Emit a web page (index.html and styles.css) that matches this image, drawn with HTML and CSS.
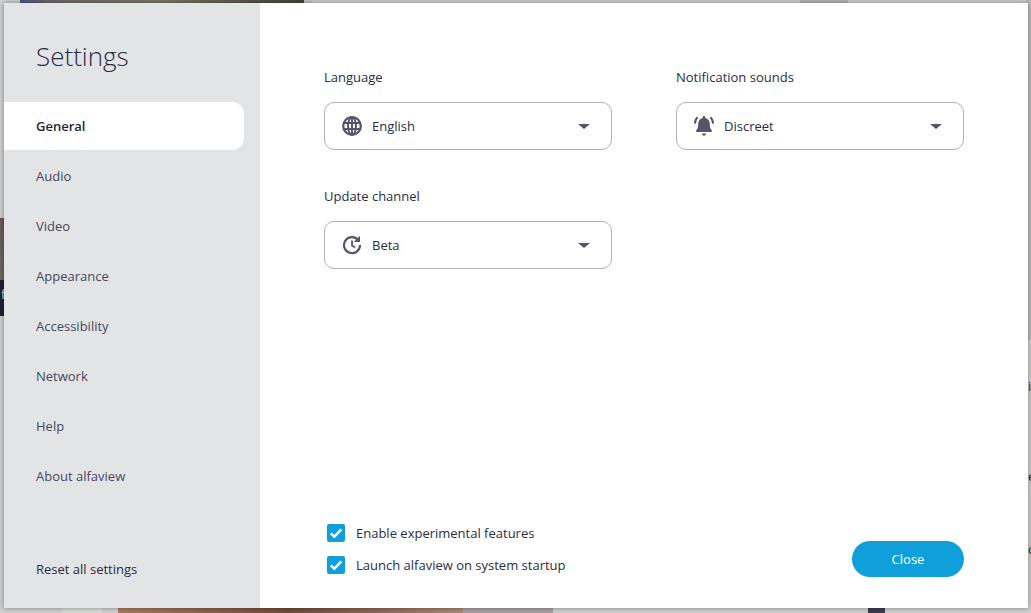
FILE: index.html
```html
<!DOCTYPE html>
<html lang="en">
<head>
<meta charset="utf-8">
<title>Settings</title>
<link rel="stylesheet" href="styles.css">
</head>
<body>
<div class="desktop">
  <div class="tile tile-top-photo"></div>
  <div class="tile tile-top-light"></div>
  <div class="tile tile-top-grey"></div>
  <div class="tile tile-left-photo"></div>
  <div class="tile tile-left-dark"><span class="peek peek-f">f</span></div>
  <div class="tile tile-bottom-pale"></div>
  <div class="tile tile-bottom-photo"></div>
  <div class="tile tile-bottom-mauve"></div>
  <div class="tile tile-bottom-navy"></div>
  <div class="tile tile-right-band"></div>
  <span class="peek peek-i">i</span>
  <span class="peek peek-e">e</span>
  <span class="peek peek-c">c</span>

  <div class="dialog">
    <aside class="sidebar">
      <h1 class="title">Settings</h1>
      <nav class="nav">
        <a class="nav-item active">General</a>
        <a class="nav-item">Audio</a>
        <a class="nav-item">Video</a>
        <a class="nav-item">Appearance</a>
        <a class="nav-item">Accessibility</a>
        <a class="nav-item">Network</a>
        <a class="nav-item">Help</a>
        <a class="nav-item">About alfaview</a>
      </nav>
      <a class="reset">Reset all settings</a>
    </aside>
    <main class="content">
      <div class="fields">
        <div class="field">
          <label class="field-label">Language</label>
          <div class="select">
            <svg class="select-icon" viewBox="0 0 20 20" fill="none" stroke="#55556b" stroke-width="1.9">
              <circle cx="10" cy="10" r="8.800" stroke-width="2.300"/>
              <ellipse cx="10" cy="10" rx="4" ry="8.700"/>
              <path d="M1.600 7h16.800M1.600 13h16.800M10 1.300v17.400"/>
            </svg>
            <span class="select-value">English</span>
            <span class="caret"></span>
          </div>
        </div>
        <div class="field">
          <label class="field-label">Notification sounds</label>
          <div class="select">
            <svg class="select-icon" viewBox="0 0 20 20" fill="#55556b">
              <path d="M10 0c.8 0 1.300.5 1.300 1.200v.9c2.700.6 4.500 3 4.500 5.800 0 3.700 1 5.300 2 6.700.4.600.1 1.400-.6 1.400H2.800c-.7 0-1-.8-.6-1.400 1-1.400 2-3 2-6.700 0-2.800 1.800-5.200 4.500-5.800v-.9C8.700.5 9.200 0 10 0z"/>
              <path d="M8 17.400h4c0 1.300-.9 2.300-2 2.300s-2-1-2-2.300z"/>
              <path d="M3.600 1.300C1.900 2.800 1 4.800.9 7.600M16.400 1.300c1.700 1.500 2.600 3.500 2.700 6.300" fill="none" stroke="#55556b" stroke-width="2"/>
            </svg>
            <span class="select-value">Discreet</span>
            <span class="caret"></span>
          </div>
        </div>
        <div class="field">
          <label class="field-label">Update channel</label>
          <div class="select">
            <svg class="select-icon" viewBox="0 0 20 20" fill="none" stroke="#55556b" stroke-width="2.200">
              <path d="M16.300 5.200A8 8 0 1 0 18 10"/>
              <path d="M18 .8v6.200h-6.200z" fill="#55556b" stroke="none"/>
              <path d="M10 5.500v5l3 2" stroke-width="1.800"/>
            </svg>
            <span class="select-value">Beta</span>
            <span class="caret"></span>
          </div>
        </div>
      </div>
      <div class="footer">
        <div class="checks">
          <label class="check">
            <span class="box"><svg viewBox="0 0 18 18" fill="none" stroke="#fff" stroke-width="2.400"><path d="M3.800 9.300l3.500 3.400 7-7.300"/></svg></span>
            Enable experimental features
          </label>
          <label class="check">
            <span class="box"><svg viewBox="0 0 18 18" fill="none" stroke="#fff" stroke-width="2.400"><path d="M3.800 9.300l3.500 3.400 7-7.300"/></svg></span>
            Launch alfaview on system startup
          </label>
        </div>
        <button class="close">Close</button>
      </div>
    </main>
  </div>
</div>
</body>
</html>
```
FILE: styles.css
```css
* { box-sizing: border-box; }
html, body { margin: 0; padding: 0; }
body {
  font-family: "Open Sans", "Noto Sans", sans-serif;
  font-size: 13px;
  color: #2b2b45;
}
.desktop {
  position: relative;
  width: 1031px;
  height: 613px;
  overflow: hidden;
  background: #cfcfcf;
}
.tile { position: absolute; }
.tile-top-photo { left: 20px; top: 0; width: 284px; height: 6px; background: linear-gradient(90deg, #4d5a80 0, #6e6a6a 12%, #7b7766 50%, #45433a 100%); }
.tile-top-light { left: 304px; top: 0; width: 8px; height: 6px; background: #c4c4c4; }
.tile-top-grey { left: 800px; top: 0; width: 48px; height: 6px; background: #b4b4b4; }
.tile-left-photo { left: 0; top: 218px; width: 6px; height: 62px; background: linear-gradient(180deg, #6a5a5c, #6d6a60); }
.tile-left-dark { left: 0; top: 280px; width: 6px; height: 36px; background: #23202f; }
.tile-bottom-pale { left: 62px; top: 606px; width: 40px; height: 7px; background: #d8dcd6; }
.tile-bottom-photo { left: 118px; top: 606px; width: 345px; height: 7px; background: linear-gradient(90deg, #a67c62, #6f4a3c 50%, #a98877); }
.tile-bottom-mauve { left: 463px; top: 606px; width: 90px; height: 7px; background: #a89fa2; }
.tile-bottom-navy { left: 868px; top: 606px; width: 17px; height: 7px; background: #3c3c50; }
.tile-right-band { left: 1026px; top: 0; width: 5px; height: 340px; background: #b9b9b9; }
.peek { position: absolute; font-size: 13px; line-height: 16px; color: #23233c; }
.peek-f { left: 1px; top: 6px; color: #d9d6c8; }
.peek-i { left: 1028px; top: 378px; color: #5a1f3a; }
.peek-e { left: 1028px; top: 468px; }
.peek-c { left: 1028px; top: 541px; }

.dialog {
  position: absolute;
  left: 4px;
  top: 3px;
  width: 1024px;
  height: 605px;
  display: flex;
  background: #fff;
  box-shadow: 0 0 5px rgba(0, 0, 0, .4);
}
.sidebar {
  width: 256px;
  background: #e3e4e6;
  display: flex;
  flex-direction: column;
  padding-top: 34px;
}
.title {
  margin: 0 0 26px 32px;
  font-size: 26px;
  line-height: 39px;
  font-weight: 300;
  color: #2b2b45;
}
.nav {
  display: flex;
  flex-direction: column;
  gap: 2px;
  width: 240px;
}
.nav-item {
  height: 48px;
  padding-left: 32px;
  display: flex;
  align-items: center;
  color: #47475f;
  border-radius: 0 12px 12px 0;
}
.nav-item.active {
  background: #fff;
  color: #1f1f3a;
  font-weight: 600;
}
.reset {
  margin-top: auto;
  margin-bottom: 30px;
  margin-left: 32px;
  line-height: 18px;
  color: #2b2b45;
}
.content {
  flex: 1;
  display: flex;
  flex-direction: column;
  justify-content: space-between;
  padding: 64px 64px 31px 64px;
}
.fields {
  display: grid;
  grid-template-columns: 288px 288px;
  column-gap: 64px;
  row-gap: 36px;
}
.field-label {
  display: block;
  line-height: 20px;
  margin-bottom: 15px;
}
.select {
  height: 48px;
  border: 1px solid #b3b3b6;
  border-radius: 10px;
  display: flex;
  align-items: center;
  padding-left: 17px;
  padding-right: 21px;
  background: #fff;
}
.select-icon {
  width: 20px;
  height: 20px;
  flex: none;
}
.select-value {
  margin-left: 10px;
  flex: 1;
}
.caret {
  width: 0;
  height: 0;
  border-left: 6px solid transparent;
  border-right: 6px solid transparent;
  border-top: 5px solid #55556b;
}
.footer {
  display: flex;
  justify-content: space-between;
  align-items: flex-end;
}
.checks {
  display: flex;
  flex-direction: column;
  gap: 14px;
  padding-left: 3px;
  margin-bottom: 3px;
}
.check {
  display: flex;
  align-items: center;
  gap: 11px;
  height: 18px;
  line-height: 18px;
}
.box {
  width: 18px;
  height: 18px;
  border-radius: 2px;
  background: #0fa0dc;
  flex: none;
  display: block;
}
.box svg { display: block; width: 18px; height: 18px; }
.close {
  width: 112px;
  height: 36px;
  border: 0;
  border-radius: 18px;
  background: #0fa0dc;
  color: #fff;
  font-family: inherit;
  font-size: 13px;
  font-weight: 500;
}
```
